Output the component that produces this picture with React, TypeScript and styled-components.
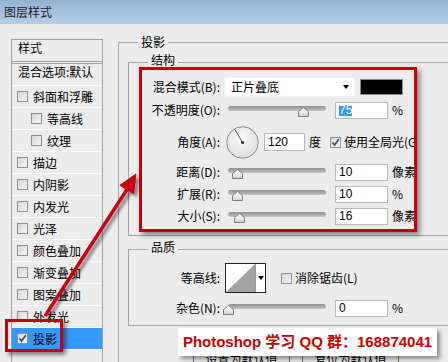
import React from "react";
import styled, { createGlobalStyle, css } from "styled-components";

const GlobalStyle = createGlobalStyle`
  html, body {
    margin: 0;
    padding: 0;
    background: #ececec;
  }
  body {
    font-family: "Noto Sans CJK SC", "Noto Sans", sans-serif;
    font-size: 12px;
    color: #000;
  }
`;

const RED = "#c9000a";

const Window = styled.div`
  position: relative;
  width: 448px;
  height: 362px;
  overflow: hidden;
  background: #ececec;
`;

const TitleBar = styled.div`
  height: 24px;
  padding-left: 4px;
  display: flex;
  align-items: center;
  background: linear-gradient(#93b0cf 0%, #a3bfdc 40%, #b3cde7 100%);
  color: #1b1b1b;
  font-size: 12px;
  line-height: 14px;
`;

const Body = styled.div`
  display: flex;
  align-items: flex-start;
  padding-left: 11px;
`;

/* left column: list of layer styles */
const StyleList = styled.div`
  flex: none;
  width: 92px;
  height: 330px;
  box-sizing: border-box;
  margin-top: 15px;
  border: 1px solid #a0a0a0;
  border-bottom: none;
  white-space: nowrap;
`;

const ListHeader = styled.div<{ $second?: boolean }>`
  box-sizing: border-box;
  height: 22px;
  display: flex;
  align-items: center;
  padding: 0 0 6px 6px;
  line-height: 14px;
  border-bottom: 1px solid #a0a0a0;
  ${({ $second }) =>
    $second &&
    css`
      height: 23px;
      margin-top: 1px;
      border-top: 1px solid #a0a0a0;
      border-bottom-color: #fbfbfb;
    `}
`;

const ListRow = styled.div<{ $sub?: boolean; $active?: boolean }>`
  box-sizing: border-box;
  height: 22px;
  display: flex;
  align-items: center;
  gap: 5px;
  padding-left: ${({ $sub }) => ($sub ? 19 : 5)}px;
  line-height: 14px;
  border-bottom: 1px solid #fbfbfb;
  background: ${({ $active }) => ($active ? "#3399ff" : "transparent")};
`;

const Box = styled.span`
  position: relative;
  flex: none;
  width: 11px;
  height: 11px;
  box-sizing: border-box;
  border: 1px solid #8e8f8f;
  background: linear-gradient(135deg, #d6d6d6, #f7f7f7);
  svg {
    position: absolute;
    left: 0;
    top: 0;
  }
`;

const CheckBox: React.FC<{ checked?: boolean }> = ({ checked }) => (
  <Box>
    {checked && (
      <svg width="9" height="9" viewBox="0 0 9 9">
        <path d="M1.5 4.5 L3.6 7 L7.8 1.3" fill="none" stroke="#2b3f8c" strokeWidth="1.6" />
      </svg>
    )}
  </Box>
);

/* right column */
const Main = styled.div`
  flex: none;
  margin: 10px 0 0 15px;
`;

const Group = styled.fieldset<{ $inner?: boolean }>`
  margin: 0;
  padding: 0;
  min-width: 0;
  border: 1px solid #a3a3a3;
  width: 360px;
  box-sizing: border-box;
  ${({ $inner }) =>
    $inner &&
    css`
      width: auto;
      margin: 4px 0 0 9px;
    `}
`;

const Legend = styled.legend<{ $lift?: boolean }>`
  margin-left: 19px;
  padding: 0 3px ${({ $lift }) => ($lift ? 4 : 0)}px;
  font-size: 12px;
  line-height: ${({ $lift }) => ($lift ? 12 : 16)}px;
`;

const QualityGroup = styled(Group)`
  margin-top: 5px;
  padding-bottom: 6px;
`;

const MarkedBox = styled.div`
  width: 278px;
  height: 165px;
  box-sizing: border-box;
  margin: -3px 0 3px 10px;
  padding-top: 7px;
  border: 3px solid ${RED};
  box-shadow: 3px 3px 5px rgba(0, 0, 0, 0.45);
  overflow: hidden;
`;

const FormRow = styled.div<{ $h?: number; $mt?: number }>`
  display: flex;
  align-items: center;
  height: ${({ $h }) => $h ?? 22}px;
  margin-top: ${({ $mt }) => $mt ?? 0}px;
  white-space: nowrap;
`;

const Label = styled.span<{ $w: number }>`
  flex: none;
  width: ${({ $w }) => $w}px;
  margin-right: 4px;
  text-align: right;
  line-height: 14px;
`;

const Select = styled.div`
  flex: none;
  width: 131px;
  height: 20px;
  box-sizing: border-box;
  display: flex;
  align-items: center;
  justify-content: space-between;
  padding: 0 5px 0 6px;
  background: #fff;
  border: 1px solid #f2f2f2;
  line-height: 14px;
`;

const Caret = styled.span`
  width: 0;
  height: 0;
  border-left: 3.5px solid transparent;
  border-right: 3.5px solid transparent;
  border-top: 4px solid #000;
`;

const Swatch = styled.div`
  flex: none;
  width: 43px;
  height: 16px;
  box-sizing: border-box;
  margin-left: 5px;
  background: #000;
  border: 1px solid #8a8a8a;
`;

const SliderWrap = styled.div`
  position: relative;
  flex: none;
  width: 106px;
  height: 22px;
`;

const Track = styled.div`
  position: absolute;
  left: 4px;
  right: 4px;
  top: 7px;
  height: 5px;
  border-radius: 3px;
  background: linear-gradient(#8f8f8f, #c4c4c4);
`;

const Thumb = styled.svg`
  position: absolute;
  top: 8px;
`;

const Slider: React.FC<{ value: number }> = ({ value }) => (
  <SliderWrap>
    <Track />
    <Thumb width="11" height="10" viewBox="0 0 11 10" style={{ left: 4 + value * 98 - 5.5 }}>
      <defs>
        <linearGradient id="thumbFill" x1="0" y1="0" x2="0" y2="1">
          <stop offset="0" stopColor="#fdfdfd" />
          <stop offset="1" stopColor="#d4d4d4" />
        </linearGradient>
      </defs>
      <polygon points="5.5,0.5 10.5,4.5 10.5,9.5 0.5,9.5 0.5,4.5" fill="url(#thumbFill)" stroke="#7c7c7c" />
    </Thumb>
  </SliderWrap>
);

const NumInput = styled.div<{ $w?: number; $h?: number }>`
  flex: none;
  width: ${({ $w }) => $w ?? 53}px;
  height: ${({ $h }) => $h ?? 17}px;
  box-sizing: border-box;
  margin-left: 5px;
  padding-left: 3px;
  display: flex;
  align-items: center;
  background: #fff;
  border: 1px solid #b4b9c0;
  font-family: "Liberation Sans", "DejaVu Sans", sans-serif;
  font-size: 12px;
  line-height: 13px;
`;

const Selected = styled.span`
  background: #3399ff;
  color: #fff;
  line-height: 11px;
`;

const Unit = styled.span`
  margin-left: 4px;
  line-height: 14px;
`;

const Dial = styled.svg`
  flex: none;
  margin-left: 2px;
`;

const CheckLabel = styled.span<{ $ml: number }>`
  display: flex;
  align-items: center;
  gap: 3px;
  margin-left: ${({ $ml }) => $ml}px;
  line-height: 14px;
`;

const Contour = styled.div`
  flex: none;
  display: flex;
  margin-left: 1px;
  width: 41px;
  height: 30px;
  box-sizing: border-box;
  border: 1px solid #262626;
  background: #fff;
`;

const ContourArrow = styled.div`
  flex: 1;
  display: flex;
  align-items: center;
  justify-content: center;
  border-left: 1px solid #9a9a9a;
`;

const ButtonRow = styled.div`
  display: flex;
  gap: 12px;
  margin-top: 21px;
  padding-left: 74px;
  padding-bottom: 20px;
`;

const Button = styled.div`
  width: 97px;
  height: 24px;
  box-sizing: border-box;
  display: flex;
  align-items: center;
  justify-content: center;
  border: 1px solid #707070;
  border-radius: 2px;
  background: linear-gradient(#f4f4f4, #dcdcdc);
  line-height: 14px;
`;

/* annotations drawn on top of the dialog */
const ArrowLayer = styled.svg`
  position: absolute;
  left: 0;
  top: 0;
  pointer-events: none;
`;

const RowMark = styled.div`
  position: absolute;
  left: 5px;
  top: 319px;
  width: 58px;
  height: 33px;
  box-sizing: border-box;
  border: 3px solid ${RED};
  box-shadow: 3px 3px 4px rgba(0, 0, 0, 0.45);
`;

const Watermark = styled.div`
  position: absolute;
  left: 178px;
  top: 328px;
  width: 259px;
  height: 28px;
  display: flex;
  align-items: center;
  justify-content: center;
  background: #fff;
  box-shadow: 3px 3px 4px rgba(0, 0, 0, 0.4);
  color: #cc0000;
  font-family: "Liberation Sans", "Noto Sans CJK SC", sans-serif;
  font-weight: 700;
  font-size: 15px;
  line-height: 18px;
  white-space: nowrap;
`;

const styleItems = [
  { label: "斜面和浮雕" },
  { label: "等高线", sub: true },
  { label: "纹理", sub: true },
  { label: "描边" },
  { label: "内阴影" },
  { label: "内发光" },
  { label: "光泽" },
  { label: "颜色叠加" },
  { label: "渐变叠加" },
  { label: "图案叠加" },
  { label: "外发光" },
  { label: "投影", on: true },
];

const sliders = [
  { label: "距离(D):", value: 0.1, num: "10", unit: "像素" },
  { label: "扩展(R):", value: 0.1, num: "10", unit: "%" },
  { label: "大小(S):", value: 0.12, num: "16", unit: "像素" },
];

const App: React.FC = () => {
  return (
    <Window>
      <GlobalStyle />
      <TitleBar>图层样式</TitleBar>
      <Body>
        <StyleList>
          <ListHeader>样式</ListHeader>
          <ListHeader $second>混合选项:默认</ListHeader>
          {styleItems.map((it) => (
            <ListRow key={it.label} $sub={it.sub} $active={it.on}>
              <CheckBox checked={it.on} />
              <span>{it.label}</span>
            </ListRow>
          ))}
        </StyleList>

        <Main>
          <Group>
            <Legend>投影</Legend>
            <Group $inner>
              <Legend $lift>结构</Legend>
              <MarkedBox>
                <FormRow $h={20}>
                  <Label $w={78}>混合模式(B):</Label>
                  <Select>
                    <span>正片叠底</span>
                    <Caret />
                  </Select>
                  <Swatch />
                </FormRow>
                <FormRow $mt={2}>
                  <Label $w={78}>不透明度(O):</Label>
                  <Slider value={0.77} />
                  <NumInput>
                    <Selected>75</Selected>
                  </NumInput>
                  <Unit>%</Unit>
                </FormRow>
                <FormRow $h={34} $mt={4}>
                  <Label $w={78}>角度(A):</Label>
                  <Dial width="33" height="33" viewBox="0 0 33 33">
                    <defs>
                      <radialGradient id="dialFill" cx="0.45" cy="0.4" r="0.6">
                        <stop offset="0" stopColor="#fbfbfb" />
                        <stop offset="1" stopColor="#dedede" />
                      </radialGradient>
                    </defs>
                    <circle cx="16.5" cy="16.5" r="15.8" fill="url(#dialFill)" stroke="#8a8a8a" />
                    <line x1="16.5" y1="16.5" x2="9" y2="3.5" stroke="#555" strokeWidth="1" />
                    <circle cx="16.5" cy="16.5" r="1.6" fill="#333" />
                  </Dial>
                  <NumInput $w={41} $h={18}>120</NumInput>
                  <Unit>度</Unit>
                  <CheckLabel $ml={9}>
                    <CheckBox checked />
                    <span>使用全局光(G)</span>
                  </CheckLabel>
                </FormRow>
                {sliders.map((s, i) => (
                  <FormRow key={s.label} $mt={i === 0 ? 2 : 0}>
                    <Label $w={78}>{s.label}</Label>
                    <Slider value={s.value} />
                    <NumInput>{s.num}</NumInput>
                    <Unit>{s.unit}</Unit>
                  </FormRow>
                ))}
              </MarkedBox>
            </Group>

            <QualityGroup $inner>
              <Legend $lift>品质</Legend>
              <FormRow $h={30} $mt={6}>
                <Label $w={91}>等高线:</Label>
                <Contour>
                  <svg width="29" height="28" viewBox="0 0 29 28">
                    <polygon points="0,28 29,0 29,28" fill="#a3a3a3" />
                  </svg>
                  <ContourArrow>
                    <Caret />
                  </ContourArrow>
                </Contour>
                <CheckLabel $ml={15}>
                  <CheckBox />
                  <span>消除锯齿(L)</span>
                </CheckLabel>
              </FormRow>
              <FormRow $mt={4}>
                <Label $w={91}>杂色(N):</Label>
                <Slider value={0} />
                <NumInput>0</NumInput>
                <Unit>%</Unit>
              </FormRow>
            </QualityGroup>

            <ButtonRow>
              <Button>设置为默认值</Button>
              <Button>复位为默认值</Button>
            </ButtonRow>
          </Group>
        </Main>
      </Body>

      <ArrowLayer width="448" height="362" viewBox="0 0 448 362">
        <defs>
          <filter id="arrowShadow" x="-20%" y="-20%" width="140%" height="140%">
            <feDropShadow dx="3" dy="3" stdDeviation="1.8" floodColor="#000" floodOpacity="0.45" />
          </filter>
        </defs>
        <g filter="url(#arrowShadow)" fill={RED} stroke={RED}>
          <line x1="45" y1="316" x2="128" y2="188" strokeWidth="3.5" />
          <polygon points="136,174 133.5,193.5 119.9,185.3" strokeWidth="1" />
        </g>
      </ArrowLayer>
      <RowMark />
      <Watermark>Photoshop 学习 QQ 群：168874041</Watermark>
    </Window>
  );
};

export default App;
